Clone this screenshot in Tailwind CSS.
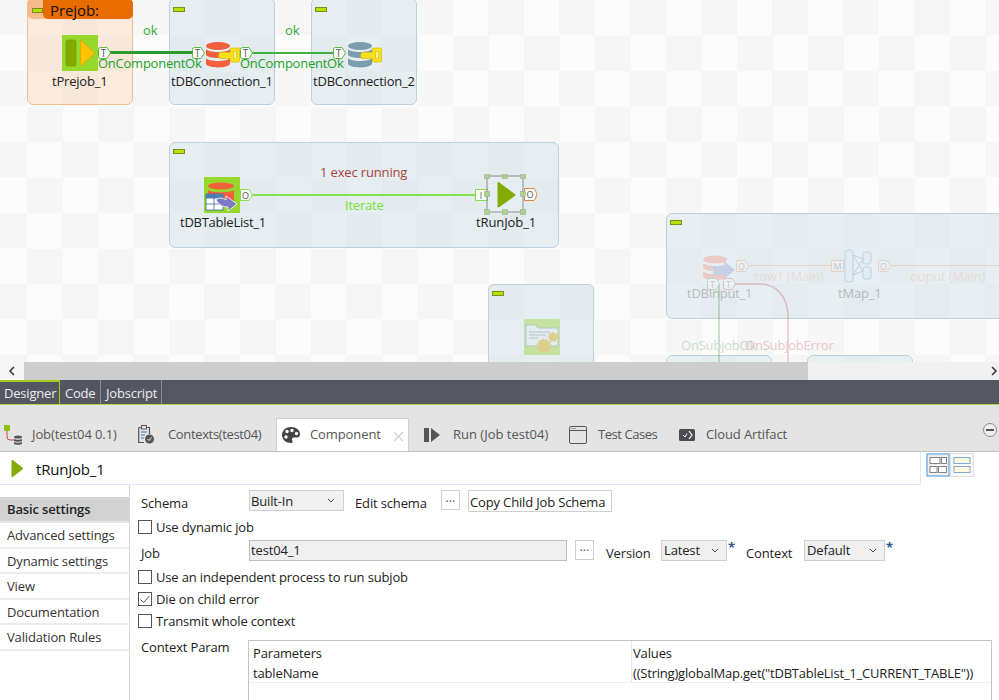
<!DOCTYPE html>
<html><head><meta charset="utf-8"><script src="https://cdn.jsdelivr.net/npm/@tailwindcss/browser@4"></script></head>
<body class="w-[999px] h-[700px] overflow-hidden bg-white flex flex-col font-['Open_Sans','Noto_Sans',sans-serif] text-[13px] text-[#222]">

<!-- Canvas -->
<div class="relative h-[362px] shrink-0 overflow-hidden bg-[repeating-conic-gradient(#f6f6f6_0_25%,#fcfcfc_0_50%)] bg-[length:71px_71px] bg-[position:27px_0px]">
  <!-- Subjob boxes -->
  <div class="absolute left-[27px] top-[-2px] w-[106px] h-[107px] rounded-[6px] border border-[#f8bd8c] bg-[#fbe0c8]/60"></div>
  <div class="absolute left-[27px] top-[-2px] w-[106px] h-[21px] rounded-[6px] bg-[#f6bb8b]"></div>
  <div class="absolute left-[43px] top-[-2px] w-[90px] h-[21px] rounded-b-[5px] rounded-tr-[6px] bg-[#e96c00] pl-[7px] pt-[2px] leading-[21px] text-[15px] font-medium tracking-[-0.1px] text-[#111]">Prejob:</div>
  <div class="absolute left-[169px] top-[-2px] w-[106px] h-[107px] rounded-[6px] border border-[#bcd0dd] bg-[#d4e2ea]/55"></div>
  <div class="absolute left-[311px] top-[-2px] w-[106px] h-[107px] rounded-[6px] border border-[#bcd0dd] bg-[#d4e2ea]/55"></div>
  <div class="absolute left-[169px] top-[142px] w-[390px] h-[106px] rounded-[6px] border border-[#bcd0dd] bg-[#d4e2ea]/55"></div>
  <div class="absolute left-[488px] top-[284px] w-[106px] h-[106px] rounded-[6px] border border-[#bcd0dd] bg-[#d4e2ea]/55"></div>
  <div class="absolute left-[666px] top-[213px] w-[360px] h-[106px] rounded-[6px] border border-[#bcd0dd] bg-[#d4e2ea]/50"></div>
  <div class="absolute left-[666px] top-[355px] w-[106px] h-[40px] rounded-[6px] border border-[#bcd0dd] bg-[#d4e2ea]/50"></div>
  <div class="absolute left-[807px] top-[355px] w-[106px] h-[40px] rounded-[6px] border border-[#bcd0dd] bg-[#d4e2ea]/50"></div>

  <!-- Collapse markers -->
  <div class="absolute left-[32px] top-[8px] w-[11px] h-[5px] bg-[#b8e000] border border-[#7c8c20]"></div>
  <div class="absolute left-[173px] top-[7px] w-[12px] h-[5px] bg-[#b8e000] border border-[#7c8c20]"></div>
  <div class="absolute left-[315px] top-[7px] w-[12px] h-[5px] bg-[#b8e000] border border-[#7c8c20]"></div>
  <div class="absolute left-[173px] top-[149px] w-[12px] h-[5px] bg-[#b8e000] border border-[#7c8c20]"></div>
  <div class="absolute left-[492px] top-[291px] w-[12px] h-[5px] bg-[#b8e000] border border-[#7c8c20]"></div>
  <div class="absolute left-[670px] top-[220px] w-[12px] h-[5px] bg-[#b8e000] border border-[#7c8c20]"></div>

  <!-- Top row lines -->
  <div class="absolute left-[109px] top-[51px] w-[84px] h-[3px] bg-[#2c9a2c]"></div>
  <div class="absolute left-[251px] top-[52px] w-[83px] h-[2px] bg-[#42b042]"></div>
  <div class="absolute left-[251px] top-[194px] w-[225px] h-[2px] bg-[#86e04c]"></div>

  <!-- tPrejob icon -->
  <svg class="absolute left-[62px] top-[35px]" width="36" height="36" viewBox="0 0 36 36"><rect width="36" height="36" fill="#96d82c"/><rect x="4" y="5" width="10" height="26" rx="2" fill="#84ab00" stroke="#6f9400" stroke-width=".6"/><path d="M18.500 5 33 18 18.500 31Z" fill="#ffc400" stroke="#e8a200" stroke-width=".8" stroke-linejoin="round"/></svg>

  <!-- DB 1 -->
  <svg class="absolute left-[206px] top-[41px]" width="34" height="28" viewBox="0 0 34 28"><g fill="#f2603c"><ellipse cx="12" cy="5" rx="12" ry="4"/><path d="M0 8C2 12 22 12 24 8V14C22 18 2 18 0 14Z"/><path d="M0 17C2 21 22 21 24 17V23C22 27.500 2 27.500 0 23Z"/></g><path d="M13.500 11.500H24.500V7.500Q24.500 7 25 7H32.500Q33.500 7 33.500 8V20Q33.500 21 32.500 21H25Q24.500 21 24.500 20.500V17.500H13.500Q12 14.500 13.500 11.500Z" fill="#f8e020" stroke="#d8c400" stroke-width=".8"/><rect x="27.500" y="10.500" width="3" height="7" fill="#fff38a" stroke="#c8b400" stroke-width=".5"/></svg>
  <!-- DB 2 -->
  <svg class="absolute left-[348px] top-[41px]" width="34" height="28" viewBox="0 0 34 28"><g fill="#7c9eac"><ellipse cx="12" cy="5" rx="12" ry="4"/><path d="M0 8C2 12 22 12 24 8V14C22 18 2 18 0 14Z"/><path d="M0 17C2 21 22 21 24 17V23C22 27.500 2 27.500 0 23Z"/></g><path d="M13.500 11.500H24.500V7.500Q24.500 7 25 7H32.500Q33.500 7 33.500 8V20Q33.500 21 32.500 21H25Q24.500 21 24.500 20.500V17.500H13.500Q12 14.500 13.500 11.500Z" fill="#f8e020" stroke="#d8c400" stroke-width=".8"/><rect x="27.500" y="10.500" width="3" height="7" fill="#fff38a" stroke="#c8b400" stroke-width=".5"/></svg>

  <!-- Top ports -->
  <svg class="absolute left-[98px] top-[47px]" width="13" height="12"><path d="M.5 2.500Q.5.500 2.500.500H9L12.500 6 9 11.500H2.500Q.5 11.500.5 9.500Z" fill="#fff" stroke="#5cb83c"/><text x="5.500" y="9.700" font-size="10" text-anchor="middle" fill="#555" font-family="Open Sans">T</text></svg>
  <svg class="absolute left-[192px] top-[47px]" width="13" height="12"><path d="M.5 2.500Q.5.500 2.500.500H9L12.500 6 9 11.500H2.500Q.5 11.500.5 9.500Z" fill="#fff" stroke="#5cb83c"/><text x="5.500" y="9.700" font-size="10" text-anchor="middle" fill="#555" font-family="Open Sans">T</text></svg>
  <svg class="absolute left-[240px] top-[47px]" width="13" height="12"><path d="M.5 2.500Q.5.500 2.500.500H9L12.500 6 9 11.500H2.500Q.5 11.500.5 9.500Z" fill="#fff" stroke="#5cb83c"/><text x="5.500" y="9.700" font-size="10" text-anchor="middle" fill="#555" font-family="Open Sans">T</text></svg>
  <svg class="absolute left-[333px] top-[47px]" width="13" height="12"><path d="M.5 2.500Q.5.500 2.500.500H9L12.500 6 9 11.500H2.500Q.5 11.500.5 9.500Z" fill="#fff" stroke="#5cb83c"/><text x="5.500" y="9.700" font-size="10" text-anchor="middle" fill="#555" font-family="Open Sans">T</text></svg>

  <!-- Top labels -->
  <div class="absolute left-[143px] top-[21px] leading-[18px] text-[#35a835]">ok</div>
  <div class="absolute left-[285px] top-[21px] leading-[18px] text-[#35a835]">ok</div>
  <div class="absolute left-[98px] top-[54px] leading-[18px] text-[#22a022] tracking-[-0.25px]">OnComponentOk</div>
  <div class="absolute left-[240px] top-[54px] leading-[18px] text-[#22a022] tracking-[-0.25px]">OnComponentOk</div>
  <div class="absolute left-[52px] top-[72px] leading-[18px] tracking-[-0.2px]">tPrejob_1</div>
  <div class="absolute left-[171px] top-[72px] leading-[18px] tracking-[-0.2px]">tDBConnection_1</div>
  <div class="absolute left-[313px] top-[72px] leading-[18px] tracking-[-0.2px]">tDBConnection_2</div>

  <!-- tDBTableList icon -->
  <svg class="absolute left-[204px] top-[177px]" width="36" height="36" viewBox="0 0 36 36"><rect width="36" height="36" fill="#96d82c"/><ellipse cx="17" cy="9" rx="13" ry="3.500" fill="#f2603c"/><path d="M4 13C6 16 28 16 30 13V24H4Z" fill="#f2603c"/><rect x="2" y="17" width="17" height="16" fill="#fff" stroke="#3c6c9c" stroke-width=".8"/><path d="M2 17H19V21.500H2Z" fill="#4a80b4"/><path d="M2 27H19M10 17V33" stroke="#3c6c9c" stroke-width=".8"/><path d="M12 23C15 20 19 21 22 23V19L33 27 24 34V30C19 30 15 28 12 23Z" fill="#7878c4" stroke="#fff" stroke-width=".8"/></svg>
  <svg class="absolute left-[240px] top-[189px]" width="13" height="12"><path d="M.5.500H9L12.500 6 9 11.500H.5Z" fill="#fff" stroke="#86e04c"/><text x="5.500" y="9.500" font-size="9" text-anchor="middle" fill="#555" font-family="Open Sans">O</text></svg>
  <svg class="absolute left-[475px] top-[189px]" width="13" height="12"><path d="M.5.500H12.500V11.500H.5Z" fill="#fff" stroke="#86e04c"/><text x="6" y="9.500" font-size="9" text-anchor="middle" fill="#555" font-family="Open Sans">I</text></svg>
  <svg class="absolute left-[524px] top-[188px]" width="14" height="13"><path d="M.5.500H10Q11 .5 13 6.500 11 12.500 10 12.500H.5Z" fill="#fff" stroke="#e8803c"/><text x="6" y="10" font-size="9" text-anchor="middle" fill="#555" font-family="Open Sans">O</text></svg>
  <!-- tRunJob icon + selection -->
  <svg class="absolute left-[484px] top-[174px]" width="44" height="42" viewBox="0 0 44 42"><path d="M3 2H39V38H3Z" fill="none" stroke="#8c8c8c" stroke-width="1"/><path d="M14.500 9 30.500 21 14.500 32.500Z" fill="#84ab00" stroke="#84ab00" stroke-width="2" stroke-linejoin="round"/><g fill="#a8d490" stroke="#98b088" stroke-width=".6"><rect x=".5" y="-.5" width="5" height="5"/><rect x="18.500" y="-.5" width="5" height="5"/><rect x="36.500" y="-.5" width="5" height="5"/><rect x=".5" y="17.500" width="5" height="5"/><rect x="36.500" y="17.500" width="5" height="5"/><rect x=".5" y="35.500" width="5" height="5"/><rect x="18.500" y="35.500" width="5" height="5"/><rect x="36.500" y="35.500" width="5" height="5"/></g></svg>

  <div class="absolute left-[320px] top-[163px] leading-[18px] text-[#a8453c] tracking-[-0.15px]">1 exec running</div>
  <div class="absolute left-[345px] top-[196px] leading-[18px] text-[#74e038] tracking-[-0.2px]">Iterate</div>
  <div class="absolute left-[180px] top-[213px] leading-[18px] tracking-[-0.25px]">tDBTableList_1</div>
  <div class="absolute left-[476px] top-[213px] leading-[18px] tracking-[-0.1px]">tRunJob_1</div>

  <!-- Faded components -->
  <div class="absolute left-0 top-0 w-[999px] h-[362px] opacity-25">
    <div class="absolute left-[749px] top-[265px] w-[83px] h-[1px] bg-[#e8803c]"></div>
    <div class="absolute left-[891px] top-[265px] w-[108px] h-[1px] bg-[#e8803c]"></div>
    <div class="absolute left-[718px] top-[284px] w-[2px] h-[78px] bg-[#389038]"></div>
    <svg class="absolute left-[735px] top-[283px]" width="56" height="80"><path d="M0 1H24C42 1 53 14 53 34V80" fill="none" stroke="#b03030" stroke-width="1.500"/></svg>
    <svg class="absolute left-[702px] top-[255px]" width="34" height="30" viewBox="0 0 34 30"><g fill="#f2603c"><ellipse cx="13" cy="4.500" rx="12" ry="4"/><path d="M1 8C3 12 23 12 25 8V13C23 17 3 17 1 13Z"/><path d="M1 16C3 20 23 20 25 16V22C23 26 3 26 1 22Z"/></g><path d="M11 11H22V6L33 15 22 24V20H11Z" fill="#6078c0"/></svg>
    <svg class="absolute left-[736px] top-[260px]" width="13" height="12"><path d="M.5.500H9L12.500 6 9 11.500H.5Z" fill="#fff" stroke="#e8803c"/><text x="5.500" y="9.500" font-size="9" text-anchor="middle" fill="#555" font-family="Open Sans">O</text></svg>
    <svg class="absolute left-[831px] top-[260px]" width="13" height="12"><path d="M.5.500H12.500V11.500H.5Z" fill="#fff" stroke="#e8803c"/><text x="6.500" y="9.500" font-size="9" text-anchor="middle" fill="#555" font-family="Open Sans">M</text></svg>
    <svg class="absolute left-[878px] top-[260px]" width="13" height="12"><path d="M.5.500H9L12.500 6 9 11.500H.5Z" fill="#fff" stroke="#e8803c"/><text x="5.500" y="9.500" font-size="9" text-anchor="middle" fill="#555" font-family="Open Sans">O</text></svg>
    <svg class="absolute left-[844px] top-[249px]" width="28" height="34" viewBox="0 0 28 34"><g fill="#d0e4f4" stroke="#3c78b4" stroke-width="1"><rect x="1" y="1" width="8" height="32" rx="2"/><rect x="19" y="3" width="8" height="12" rx="2"/><rect x="19" y="18" width="8" height="12" rx="2"/></g><path d="M9 6 19 22M9 26 19 10M9 6 19 10M9 26 19 22" stroke="#3c78b4" fill="none"/></svg>
    <svg class="absolute left-[707px] top-[278px]" width="13" height="12"><path d="M.5 2.500Q.5.500 2.500.500H9L12.500 6 9 11.500H2.500Q.5 11.500.5 9.500Z" fill="#fff" stroke="#389038"/><text x="5.500" y="9.500" font-size="9" text-anchor="middle" fill="#555" font-family="Open Sans">T</text></svg>
    <svg class="absolute left-[723px] top-[278px]" width="13" height="12"><path d="M.5 2.500Q.5.500 2.500.500H9L12.500 6 9 11.500H2.500Q.5 11.500.5 9.500Z" fill="#fff" stroke="#b03030"/><text x="5.500" y="9.500" font-size="9" text-anchor="middle" fill="#555" font-family="Open Sans">T</text></svg>
    <div class="absolute left-[754px] top-[267px] leading-[18px] text-[#e8803c]/70 tracking-[-0.2px]">row1 (Main)</div>
    <div class="absolute left-[910px] top-[267px] leading-[18px] text-[#e8803c]/70 tracking-[-0.2px]">ouput (Main)</div>
    <div class="absolute left-[687px] top-[284px] leading-[18px] tracking-[-0.25px]">tDBInput_1</div>
    <div class="absolute left-[838px] top-[284px] leading-[18px] tracking-[-0.2px]">tMap_1</div>
    <div class="absolute left-[681px] top-[336px] leading-[18px] text-[#389038] tracking-[-0.2px]">OnSubjobOk</div>
    <div class="absolute left-[745px] top-[336px] leading-[18px] text-[#b03030] tracking-[-0.2px]">OnSubjobError</div>
  </div>
  <!-- folder gear icon -->
  <svg class="absolute left-[524px] top-[319px] opacity-40" width="36" height="36" viewBox="0 0 36 36"><rect width="36" height="36" fill="#96d82c"/><path d="M2 6H12L14 9H34V27H2Z" fill="#e4eef0" stroke="#6c8c94"/><path d="M5 13H26M5 16H22M5 19H14" stroke="#6c8c94" stroke-width="1"/><circle cx="20" cy="27" r="6.500" fill="#d8a400" stroke="#d8a400" stroke-dasharray="2 1.500" stroke-width="2"/><circle cx="29" cy="18" r="4" fill="#d8a400" stroke="#d8a400" stroke-dasharray="2 1.500" stroke-width="2"/></svg>
</div>

<!-- Scrollbar -->
<div class="flex h-[18px] shrink-0 bg-[#f0f0f0] items-stretch">
  <div class="w-[24px] flex items-center justify-center bg-[#f7f7f7]"><svg width="8" height="10" viewBox="0 0 8 10"><path d="M6 1 2 5 6 9" fill="none" stroke="#333" stroke-width="1.500"/></svg></div>
  <div class="w-[784px] bg-[#cdcdcd]"></div>
  <div class="flex-1 flex items-center justify-end pr-[1px]"><svg width="8" height="10" viewBox="0 0 8 10"><path d="M2 1 6 5 2 9" fill="none" stroke="#333" stroke-width="1.500"/></svg></div>
</div>

<!-- Editor tabs -->
<div class="h-[25px] shrink-0 bg-[#545762] border-b border-[#b8d44c] flex items-start text-[13px] text-[#ececec] leading-[22px]">
  <div class="w-[60px] h-[24px] pl-[4px] border-t-2 border-r border-[#a5cc1a] bg-[#545762] tracking-[-0.2px]">Designer</div>
  <div class="w-[41px] h-[24px] pl-[5px] pt-[2px] border-r border-[#8a8c94] tracking-[-0.2px]">Code</div>
  <div class="w-[61px] h-[24px] pl-[5px] pt-[2px] border-r border-[#8a8c94] tracking-[-0.2px]">Jobscript</div>
</div>

<!-- View tabs -->
<div class="relative h-[47px] shrink-0 bg-[#e4e4e4] border-b border-[#bfbfbf] text-[#555] tracking-[-0.1px]">
  <div class="absolute left-[0px] top-[0px] bottom-0 flex items-end h-full">
    <div class="flex items-center h-[33px] w-[137px] pl-[4px] gap-[10px]">
      <svg width="18" height="20" viewBox="0 0 18 20"><rect x="0" y="0" width="6" height="6" fill="#8cc414"/><path d="M3 6V12Q3 15 6 15H10" fill="none" stroke="#d84040" stroke-width="1"/><ellipse cx="14" cy="12" rx="4" ry="1.500" fill="#555"/><path d="M10 14C11 15 17 15 18 14V16C17 17 11 17 10 16ZM10 17C11 18 17 18 18 17V19C17 20 11 20 10 19Z" fill="#555"/></svg>
      <span>Job(test04 0.1)</span>
    </div>
    <div class="flex items-center h-[33px] w-[139px] pl-[1px] gap-[14px]">
      <svg width="16" height="19" viewBox="0 0 16 19"><path d="M.7 2.500H11.500V9M6 17.500H.7V2.500" fill="none" stroke="#555" stroke-width="1.200"/><rect x="3.500" y=".5" width="5" height="3.500" fill="#e4e4e4" stroke="#555"/><path d="M3 7H9M3 10H7M3 13H6" stroke="#3c78b4" stroke-width="1.200"/><circle cx="11.500" cy="14" r="4.500" fill="#555"/><path d="M9.500 14 11 15.500 13.500 12.500" fill="none" stroke="#fff" stroke-width="1"/></svg>
      <span class="tracking-[-0.35px]">Contexts(test04)</span>
    </div>
    <div class="relative flex items-center h-[33px] w-[133px] mt-[-1px] bg-white border border-b-0 border-[#cfcfcf] pl-[5px] gap-[10px] self-end">
      <svg width="18" height="16" viewBox="0 0 18 16"><path d="M9 0C4 0 0 3.500 0 8C0 12.500 4 16 9 16C11 16 11 14 10 13C9.500 11.500 10.500 10.500 12 10.500H15C17 10.500 18 9 18 7C18 3 14 0 9 0Z" fill="#444"/><circle cx="5" cy="4.500" r="1.700" fill="#fff"/><circle cx="10" cy="3.500" r="1.700" fill="#fff"/><circle cx="14.500" cy="6.500" r="1.700" fill="#fff"/><circle cx="4" cy="10" r="1.700" fill="#fff"/></svg>
      <span>Component</span>
      <svg class="mt-[3px] ml-[2px]" width="11" height="11" viewBox="0 0 11 11"><path d="M1 1 10 10M10 1 1 10" stroke="#d0d0d0" stroke-width="1.200"/></svg>
    </div>
    <div class="flex items-center h-[33px] w-[160px] pl-[15px] gap-[13px]">
      <svg width="16" height="14" viewBox="0 0 16 14"><rect x="0" y="0" width="5" height="14" fill="#555"/><path d="M7 0 16 7 7 14Z" fill="#555"/></svg>
      <span class="tracking-[0px]">Run (Job test04)</span>
    </div>
    <div class="flex items-center h-[33px] w-[110px] pl-[0px] gap-[11px]">
      <svg width="18" height="18" viewBox="0 0 18 18"><rect x=".5" y=".5" width="17" height="17" rx="1.500" fill="none" stroke="#555"/><path d="M.5 4.500H17.500" stroke="#555"/><path d="M2.500 2.500H7" stroke="#555" stroke-dasharray="1 1"/></svg>
      <span class="tracking-[-0.45px]">Test Cases</span>
    </div>
    <div class="flex items-center h-[33px] pl-[0px] gap-[11px]">
      <svg width="16" height="12" viewBox="0 0 16 12"><rect width="16" height="12" rx="1.500" fill="#4c4c54"/><path d="M10 2 13 6 10 10" fill="none" stroke="#fff" stroke-width="1.200"/><path d="M4 6 6 8 8 4.500" fill="none" stroke="#fff"/></svg>
      <span>Cloud Artifact</span>
    </div>
  </div>
  <svg class="absolute left-[983px] top-[18px]" width="14" height="14" viewBox="0 0 14 14"><circle cx="7" cy="7" r="6.500" fill="#eee" stroke="#8c8c8c"/><rect x="3" y="6" width="8" height="2" fill="#555"/></svg>
</div>

<!-- Title -->
<div class="relative h-[33px] shrink-0 flex">
  <div class="w-[921px] h-full border-b border-r border-[#dce8f4] flex items-center pl-[11px] gap-[12px]">
    <svg width="13" height="19" viewBox="0 0 13 19"><path d="M1 1 12 9.500 1 18Z" fill="#84ab00" stroke="#84ab00" stroke-linejoin="round"/></svg>
    <span class="text-[15px] font-medium text-[#111] tracking-[-0.2px] pt-[2px]">tRunJob_1</span>
  </div>
  <svg class="ml-[5px] mt-[1px]" width="24" height="24" viewBox="0 0 24 24"><rect x="1" y="1" width="22" height="22" fill="#f0f0f0" stroke="#74b0e0" stroke-width="1.400"/><g fill="#fff" stroke="#777" stroke-width=".9"><rect x="4" y="4.500" width="10" height="6"/><rect x="15.500" y="4.500" width="5" height="6"/><rect x="4" y="13.500" width="7" height="6"/><rect x="12.500" y="13.500" width="8" height="6"/></g></svg>
  <svg class="ml-[0px] mt-[1px]" width="24" height="24" viewBox="0 0 24 24"><rect x=".5" y=".5" width="23" height="23" fill="#fafafa" stroke="#ddd"/><g fill="#fffbe0" stroke="#74a0d0" stroke-width=".9"><rect x="4" y="4.500" width="16" height="6"/><rect x="4" y="13.500" width="16" height="6"/></g></svg>
</div>

<!-- Settings -->
<div class="flex flex-1 min-h-0">
  <div class="w-[130px] shrink-0 border-r border-[#d8d8d8] pt-[12px] text-[#333] leading-[25px] tracking-[-0.15px]">
    <div class="h-[26px] bg-[#d2d2d2] pl-[7px] font-semibold border-b-2 border-[#e4e4e4] text-[#222]">Basic settings</div>
    <div class="h-[25.500px] pl-[7px] border-b-2 border-[#ececec]">Advanced settings</div>
    <div class="h-[25.500px] pl-[7px] border-b-2 border-[#ececec]">Dynamic settings</div>
    <div class="h-[25.500px] pl-[7px] border-b-2 border-[#ececec]">View</div>
    <div class="h-[25.500px] pl-[7px] border-b-2 border-[#ececec]">Documentation</div>
    <div class="h-[25.500px] pl-[7px] border-b-2 border-[#ececec]">Validation Rules</div>
  </div>
  <div class="flex-1 min-w-0 pl-[8px] pt-[5px] text-[#222] tracking-[-0.15px]">
    <div class="flex items-start h-[29px]">
      <span class="w-[111px] pl-[3px] pt-[4px]">Schema</span>
      <div class="w-[95px] h-[21px] bg-[#f0f0f0] border border-[#d0d0d0] flex items-center justify-between pl-[1px] pr-[8px] leading-[17px]"><span class="pt-[1px]">Built-In</span><svg width="8" height="5" viewBox="0 0 8 5"><path d="M1 1 4 4 7 1" fill="none" stroke="#444"/></svg></div>
      <span class="ml-[11px] pt-[4px] w-[72px]">Edit schema</span>
      <div class="ml-[14px] w-[19px] h-[20px] bg-white border border-[#cfcfcf] text-center leading-[12px] text-[#666]">...</div>
      <div class="ml-[8px] w-[144px] h-[22px] bg-white border border-[#cfcfcf] leading-[22px] pl-[1px]">Copy Child Job Schema</div>
    </div>
    <div class="flex items-center h-[22px] mt-[-3px] gap-[4px]"><span class="w-[14px] h-[14px] border border-[#555] bg-white"></span><span class="pt-[1px]">Use dynamic job</span></div>
    <div class="flex items-start h-[26px] mt-[2px]">
      <span class="w-[111px] pl-[3px] pt-[4px]">Job</span>
      <div class="w-[318px] h-[21px] bg-[#efefef] border border-[#bdbdbd] leading-[19px] pl-[1px]">test04_1</div>
      <div class="ml-[8px] w-[19px] h-[20px] bg-white border border-[#cfcfcf] text-center leading-[10px] text-[#666]">...</div>
      <span class="ml-[12px] pt-[4px] w-[55px]">Version</span>
      <div class="w-[66px] h-[21px] bg-[#f0f0f0] border border-[#d0d0d0] flex items-center justify-between pl-[2px] pr-[7px]"><span class="pt-[1px]">Latest</span><svg width="8" height="5" viewBox="0 0 8 5"><path d="M1 1 4 4 7 1" fill="none" stroke="#444"/></svg></div>
      <span class="ml-[1px] text-[#2c5c8c] font-bold leading-[14px] w-[18px]">*</span>
      <span class="pt-[4px] w-[58px]">Context</span>
      <div class="w-[81px] h-[21px] bg-[#f0f0f0] border border-[#d0d0d0] flex items-center justify-between pl-[2px] pr-[7px]"><span class="pt-[1px]">Default</span><svg width="8" height="5" viewBox="0 0 8 5"><path d="M1 1 4 4 7 1" fill="none" stroke="#444"/></svg></div>
      <span class="ml-[1px] text-[#2c5c8c] font-bold leading-[14px]">*</span>
    </div>
    <div class="flex items-center h-[22px] gap-[4px]"><span class="w-[14px] h-[14px] border border-[#555] bg-white"></span><span class="pt-[1px]">Use an independent process to run subjob</span></div>
    <div class="flex items-center h-[22px] gap-[4px]"><span class="w-[14px] h-[14px] border border-[#555] bg-white flex items-center justify-center"><svg width="10" height="9" viewBox="0 0 10 9"><path d="M.5 4.500 3.500 7.500 9.500 1" fill="none" stroke="#555"/></svg></span><span class="pt-[1px]">Die on child error</span></div>
    <div class="flex items-center h-[22px] gap-[4px]"><span class="w-[14px] h-[14px] border border-[#555] bg-white"></span><span class="pt-[1px]">Transmit whole context</span></div>
    <div class="flex mt-[8px]">
      <span class="w-[110px] pl-[3px] leading-[14px]">Context Param</span>
      <div class="w-[744px] h-[70px] border border-[#c4c4c4] pl-[4px] relative">
        <div class="flex h-[21px] items-center pt-[4px]"><span class="w-[380px]">Parameters</span><span>Values</span></div>
        <div class="flex h-[21px] items-center pt-[2px]"><span class="w-[380px]">tableName</span><span class="tracking-[-0.2px]">((String)globalMap.get("tDBTableList_1_CURRENT_TABLE"))</span></div>
        <div class="absolute left-0 right-0 top-[41px] h-[1px] bg-[#eeeeee]"></div>
        <div class="absolute left-[382px] top-0 h-[41px] w-[1px] bg-[#e8e8e8]"></div>
      </div>
    </div>
  </div>
</div>
</body></html>
